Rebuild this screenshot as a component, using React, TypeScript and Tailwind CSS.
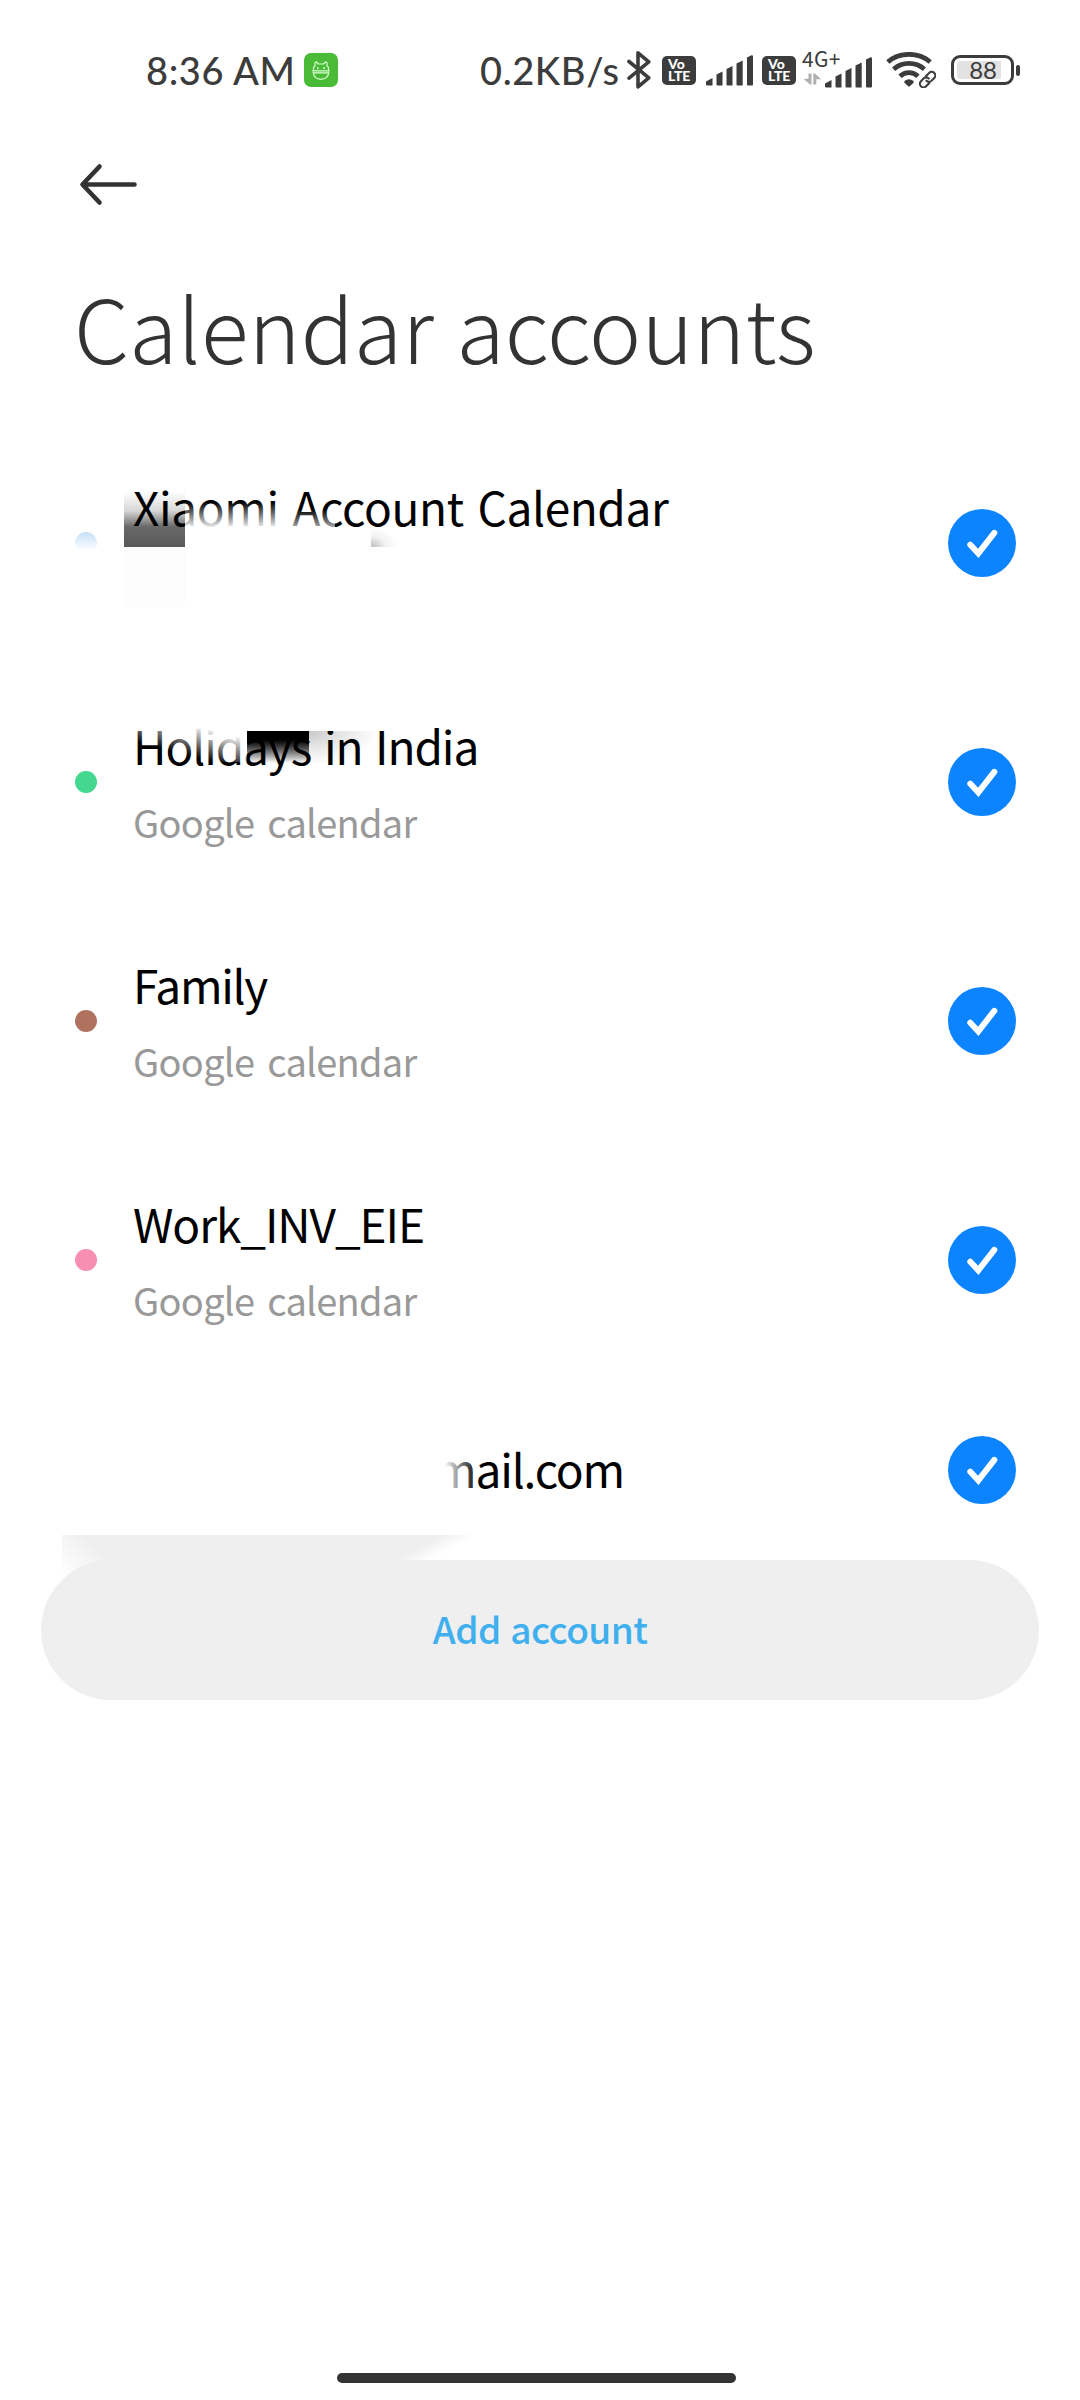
import React from 'react';

interface Account {
    name: string;
    source?: string;
    dot: string;
    nameClass: string;
}

const accounts: Account[] = [
    { name: 'Xiaomi Account Calendar', dot: 'bg-linear-to-b from-[#c6e0f9] to-white to-85%', nameClass: 'tracking-[-0.4px] [word-spacing:4px]' },
    { name: 'Holidays in India', source: 'Google calendar', dot: 'bg-[#44d78f]', nameClass: 'tracking-[-1.1px] [word-spacing:3.5px]' },
    { name: 'Family', source: 'Google calendar', dot: 'bg-[#ae725e]', nameClass: 'tracking-[-1.3px]' },
    { name: 'Work_INV_EIE', source: 'Google calendar', dot: 'bg-[#f78fb3]', nameClass: 'tracking-[-1.06px]' },
];

const VolteBadge = ({ className }: { className: string }) => (
    <div className={`flex h-[29px] w-[34px] shrink-0 flex-col justify-center rounded-[5px] bg-[#3c3c3c] pl-[6px] font-['Lato',sans-serif] text-[14px] font-black leading-[12px] text-white ${className}`}>
        <span>Vo</span>
        <span className="tracking-[-0.2px]">LTE</span>
    </div>
);

const SignalBars = ({ className = '' }: { className?: string }) => (
    <svg viewBox="0 0 47 31" className={`h-[31px] w-[47px] shrink-0 fill-[#3c3c3c] ${className}`}>
        <path d="M0 26.5 L6.5 23 V30.5 H1.2 Q0 30.5 0 29.3 Z" />
        <path d="M10.5 19.5 L16.5 16.5 V30.5 H11.5 Q10.5 30.5 10.5 29.5 Z" />
        <path d="M20.5 14 L26.5 11 V30.5 H21.5 Q20.5 30.5 20.5 29.5 Z" />
        <path d="M30.5 8.5 L36.7 5.5 V30.5 H31.5 Q30.5 30.5 30.5 29.5 Z" />
        <path d="M41 2.5 L45.5 0.3 Q47 0 47 1.5 V29.5 Q47 30.5 46 30.5 H42 Q41 30.5 41 29.5 Z" />
    </svg>
);

const StatusBar = () => (
    <div className="mt-[46px] flex h-12 items-center pl-[146px] font-['Lato',sans-serif] text-[38px] font-medium leading-10 text-[#3c3c3c]">
        <span className="w-[158px] whitespace-nowrap tracking-[0.6px]">8:36 AM</span>

        {/* App notification */}
        <svg viewBox="0 0 34 34" className="h-[34px] w-[34px] shrink-0" fill="none" stroke="#d8ffd0" strokeWidth="1.2" strokeLinecap="round" strokeLinejoin="round">
            <rect width="34" height="34" rx="7" fill="#4abb37" stroke="none" />
            <path d="M9.5 17.8 V14.5 L11 12.8 V9.8 L12.5 8.8 L14.3 11 H19.7 L21.5 8.8 L23 9.8 V12.8 L24.5 14.5 V17.8" />
            <path d="M8.7 17.8 H25.3 M9.2 19.8 H24.8" />
            <path d="M9.3 19.8 C9.8 24 13 26.3 17 26.3 C21 26.3 24.2 24 24.7 19.8" />
            <path d="M13.8 15 V15.3 M20.2 15 V15.3" strokeWidth="1.8" />
        </svg>

        <span className="ml-[142px] w-[147px] whitespace-nowrap tracking-[0.6px]">0.2KB/s</span>

        {/* Bluetooth */}
        <svg viewBox="0 0 24 40" className="h-10 w-6 shrink-0" fill="none" stroke="#3c3c3c" strokeWidth="3.6" strokeLinecap="round" strokeLinejoin="round">
            <path d="M2 11.5 L21.8 27.8 L11 36.8 V2.8 L21.8 11.8 L2 28.2" />
        </svg>

        <VolteBadge className="ml-[11px]" />
        <SignalBars className="ml-[10px]" />
        <VolteBadge className="ml-[9px]" />

        {/* Mobile data */}
        <div className="relative ml-[7px] flex h-9 w-[69px] items-end justify-end">
            <span className="absolute -left-px -top-1 font-['Noto_Sans_CJK_SC',sans-serif] text-[21px] font-normal leading-5 tracking-[0.3px]">4G+</span>
            <svg viewBox="0 0 17 12" className="mb-[3px] mr-[4px] h-3 w-[17px] shrink-0 fill-[#b0b0b0]">
                <path d="M4.5 0.5 H7.5 V11.5 H6 L0.3 6.5 V5.8 H4.5 Z" />
                <path d="M9.3 11.5 V0.5 H10.8 L16.5 5.5 V6.2 H12.3 V11.5 Z" />
            </svg>
            <SignalBars />
        </div>

        {/* Wifi with link badge */}
        <svg viewBox="0 0 50 36" className="ml-[14px] h-9 w-[50px] shrink-0" fill="none" stroke="#3c3c3c">
            <path d="M1.8 10 C13.5 -0.2 32.5 -0.2 44.2 10" strokeWidth="4.8" />
            <path d="M7.6 17.2 C16.5 9.5 29.5 9.5 38.4 17.2" strokeWidth="4.8" />
            <path d="M14 24.2 C19.2 19.4 26.8 19.4 32 24.2" strokeWidth="4.8" />
            <path d="M18.4 29 Q23 25.4 27.6 29 V30.8 L23.8 34.2 Q23 34.8 22.2 34.2 L18.4 30.8 Z" fill="#3c3c3c" stroke="none" />
            <g transform="translate(41.6 27.6) rotate(-45)" strokeLinecap="round">
                <rect x="-9.5" y="-3.8" width="11" height="7.6" rx="3.8" stroke="#fff" strokeWidth="4.5" />
                <rect x="-1.5" y="-3.8" width="11" height="7.6" rx="3.8" stroke="#fff" strokeWidth="4.5" />
                <path d="M-1.4 3.6 H-5.8 A3.6 3.6 0 0 1 -5.8 -3.6 H-1.8 A3.4 3.4 0 0 1 1.6 0" strokeWidth="2.1" />
                <path d="M1.4 -3.6 H5.8 A3.6 3.6 0 0 1 5.8 3.6 H1.8 A3.4 3.4 0 0 1 -1.6 0" strokeWidth="2.1" />
            </g>
        </svg>

        {/* Battery */}
        <div className="ml-[15px] flex shrink-0 items-center">
            <div className="flex h-[30px] w-[63px] rounded-[9px] border-[3px] border-[#3c3c3c] p-[3px]">
                <div className="flex h-[18px] w-[44px] items-center justify-end rounded-l-[4px] bg-[#e2e2e2]">
                    <span className="mr-[4px] text-[24px] font-normal leading-[18px]">88</span>
                </div>
            </div>
            <div className="ml-[2px] h-[11px] w-[4px] rounded-[2px] bg-[#3c3c3c]" />
        </div>
    </div>
);

const CheckMark = () => (
    <svg viewBox="0 0 68 68" className="h-[68px] w-[68px] shrink-0">
        <circle cx="34" cy="34" r="34" fill="#0d84ff" />
        <path d="M22.3 35.8 L30.3 44.3 L46.3 23.8" fill="none" stroke="#fff" strokeWidth="6" strokeLinecap="round" strokeLinejoin="miter" />
    </svg>
);

const AccountRow = ({ account, children }: { account: Account; children?: React.ReactNode }) => (
    <div className="relative flex h-[239px] items-center pl-[75px] pr-16">
        {children}
        <div className={`h-[22px] w-[22px] rounded-full ${account.dot}`} />
        <div className="z-10 ml-9 flex-1 whitespace-nowrap">
            <div className={`text-[46px] leading-[64px] text-black ${account.nameClass}`}>{account.name}</div>
            <div className="mt-[17px] h-14 text-[38px] leading-[56px] tracking-[-0.7px] text-[#999999] [word-spacing:5px]">{account.source}</div>
        </div>
        <CheckMark />
    </div>
);

export default function App() {
    return (
        <div className="flex h-[2400px] w-[1080px] flex-col overflow-hidden bg-white font-['Noto_Sans_CJK_SC',sans-serif]">
            <StatusBar />

            <div className="mt-[66px] h-[50px] pl-[78px]">
                <svg viewBox="0 0 60 50" className="h-[50px] w-[60px]" fill="none" stroke="#333" strokeWidth="4.6" strokeLinecap="round" strokeLinejoin="round">
                    <path d="M56.5 24.5 H5 M21.5 6.5 L4.5 24.5 L21.5 42.5" />
                </svg>
            </div>

            <h1 className="mt-[52px] h-32 whitespace-nowrap pl-[74px] text-[88px] font-light leading-[128px] tracking-[0.1px] text-[#333] [word-spacing:3px]">Calendar accounts</h1>

            <div className="mt-[33px]">
                <AccountRow account={accounts[0]}>
                    {/* smudge behind the first letters, fade over the rest of the name */}
                    <div className="absolute left-[124px] top-[68px] h-[56px] w-[61px] bg-[linear-gradient(#ffffff,#d8d8d8_35%,#686868_64%,#5a5a5a)]" />
                    <div className="absolute left-[124px] top-[124px] h-[60px] w-[61px] bg-[#fcfcfc]" />
                    <div className="absolute left-[185px] top-[79px] z-20 h-[34px] w-[100px] bg-linear-to-b from-transparent to-white to-80%" />
                    <div className="absolute left-[285px] top-[86px] z-20 h-[28px] w-[50px] bg-linear-to-b from-transparent to-white" />
                    <div className="absolute left-[371px] top-[105px] h-[19px] w-[26px] bg-[radial-gradient(ellipse_at_bottom_left,#bcbcbc,#f2f2f2_40%,#ffffff_75%)]" />
                </AccountRow>
                <AccountRow account={accounts[1]}>
                    <div className="absolute left-[130px] top-[66px] z-20 h-[34px] w-[117px] bg-[linear-gradient(195deg,#ffffff_16%,transparent_67%)]" />
                    <div className="absolute left-[247px] top-[69px] h-[32px] w-[62px] bg-linear-to-b from-black from-20% to-white" />
                    <div className="absolute left-[309px] top-[69px] h-[32px] w-[66px] bg-[radial-gradient(ellipse_at_top_left,#c8c8c8,#e6e6e6_35%,#ffffff_75%)]" />
                    <div className="absolute left-[240px] top-[59px] z-20 h-[10px] w-[128px] bg-white" />
                </AccountRow>
                <AccountRow account={accounts[2]} />
                <AccountRow account={accounts[3]} />

                <div className="relative flex h-[181px] items-center pl-[434px] pr-16">
                    <div className="flex-1 pb-1 text-[46px] leading-[64px] tracking-[-1.15px] text-black">mail.com</div>
                    <CheckMark />
                    <div className="absolute left-[430px] top-[60px] h-[60px] w-[48px] bg-linear-to-r from-white from-30% to-transparent" />
                    {/* soft shadow resting on the button's top edge */}
                    <div className="absolute left-[62px] top-[156px] h-[44px] w-[188px] bg-[#efefef] mask-[linear-gradient(45deg,transparent_2%,black_29%)]" />
                    <div className="absolute left-[250px] top-[156px] h-[25px] w-[225px] bg-[#efefef] mask-[linear-gradient(152deg,black_70%,transparent_84%)]" />
                </div>
            </div>

            <button className="z-10 mx-[41px] h-[140px] shrink-0 rounded-full bg-[#efefef] pb-[3px] text-[37px] font-medium tracking-[-0.6px] text-[#3fafee] [word-spacing:2px]">Add account</button>

            <div className="ml-[337px] mt-auto mb-[17px] h-[10px] w-[399px] shrink-0 rounded-full bg-[#333]" />
        </div>
    );
}
